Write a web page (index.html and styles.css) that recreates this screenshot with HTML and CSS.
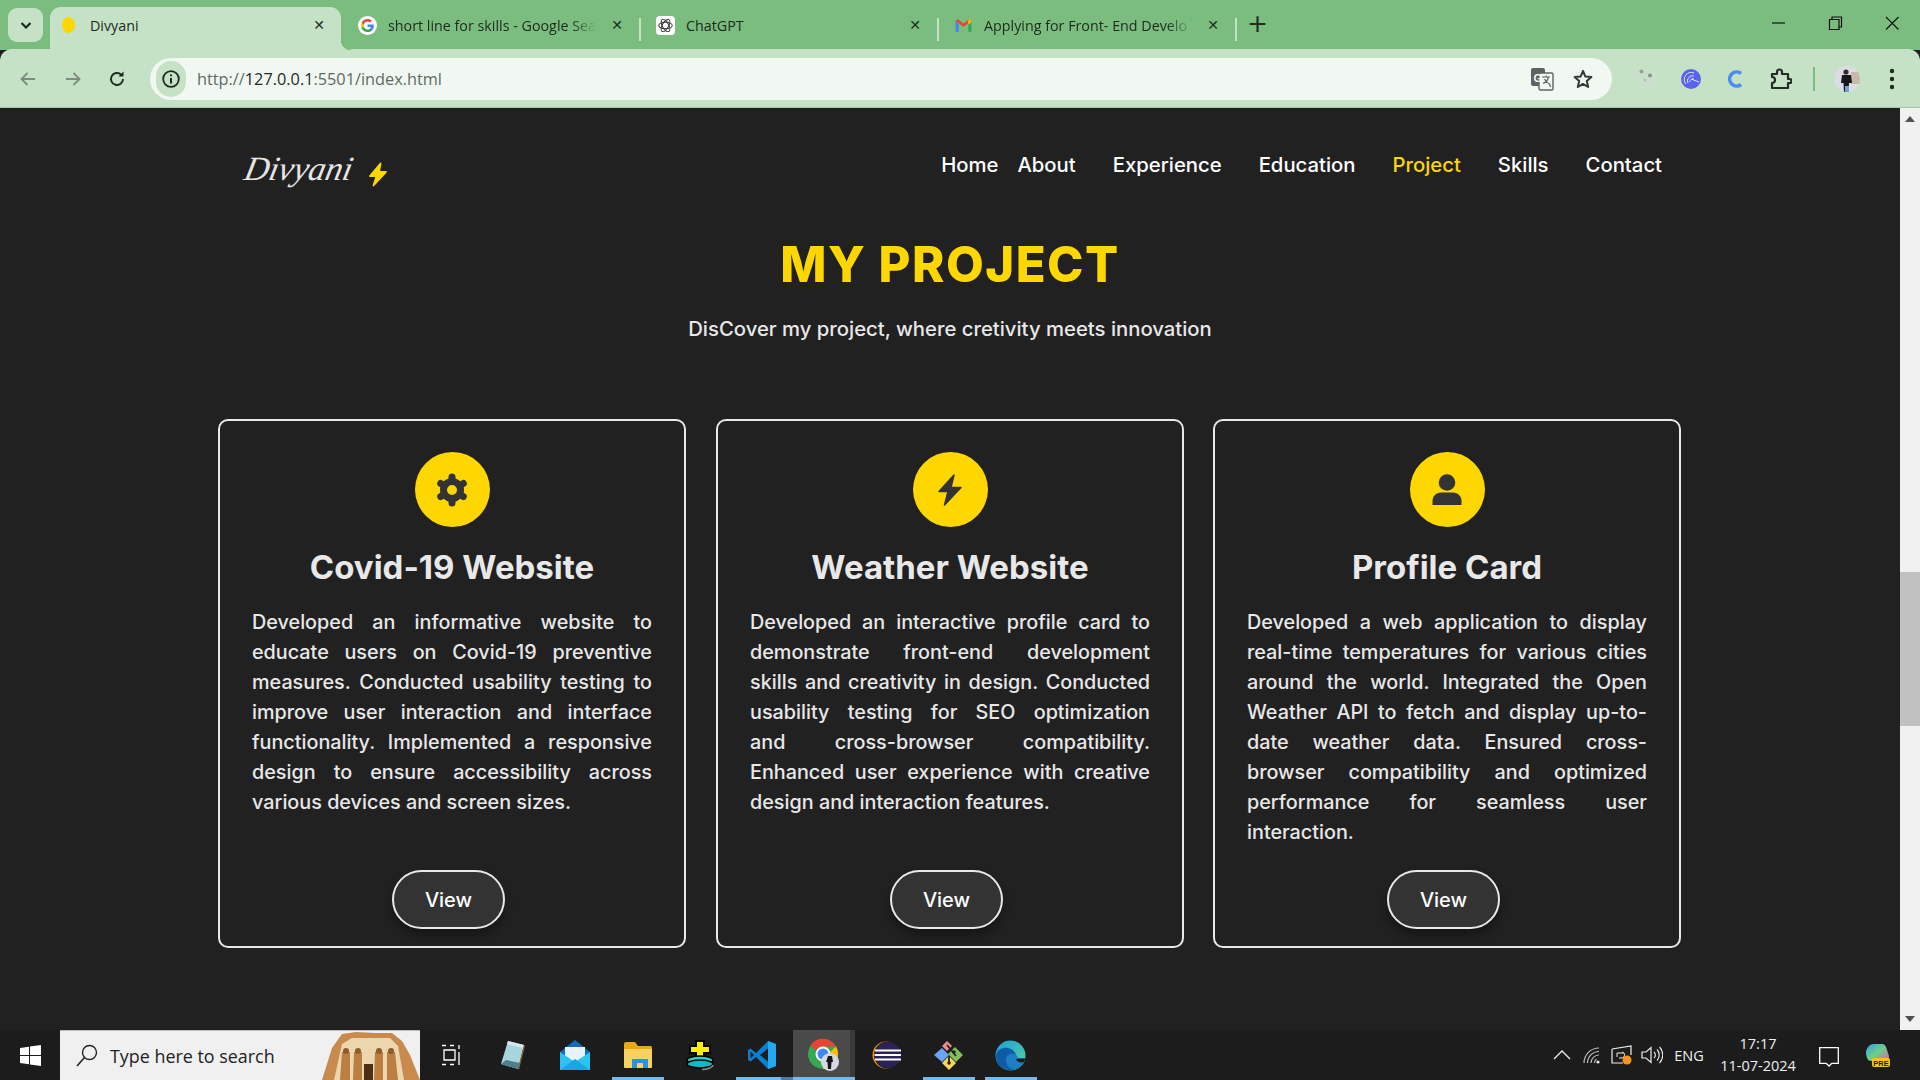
FILE: index.html
```html
<!DOCTYPE html>
<html lang="en">
<head>
  <meta charset="UTF-8" />
  <meta name="viewport" content="width=device-width, initial-scale=1.0"/>
  <title>Divyani</title>
  <link rel="stylesheet" href="styles.css">
</head>
<body>

<!-- BROWSER TABS -->
<div class="tabstrip">
  <button class="tab-search">
    <svg width="16" height="16" viewBox="0 0 16 16"><path d="M3.5 6l4.5 4.5L12.500 6" fill="none" stroke="#1f2a1f" stroke-width="2.200"/></svg>
  </button>
  <div class="tab tab-active">
    <span class="fav-dot"></span>
    <span class="tab-title">Divyani</span>
    <span class="tab-close">✕</span>
  </div>
  <div class="tab tab-sep">
    <svg class="fav" viewBox="0 0 24 24">
      <circle cx="12" cy="12" r="12" fill="#fff"/>
      <path d="M20 12.300c0-.6 0-1.100-.1-1.600H12v3.100h4.500c-.2 1-.8 1.900-1.700 2.500v2h2.700c1.600-1.500 2.500-3.600 2.500-6z" fill="#4285f4"/>
      <path d="M12 20.300c2.200 0 4.100-.7 5.500-2l-2.700-2c-.7.500-1.700.8-2.800.8-2.200 0-4-1.500-4.600-3.400H4.600v2.100c1.400 2.700 4.200 4.500 7.400 4.500z" fill="#34a853"/>
      <path d="M7.400 13.700c-.3-1-.3-2.100 0-3.100V8.500H4.600c-1 1.900-1 4.200 0 6.200z" fill="#fbbc05"/>
      <path d="M12 7c1.200 0 2.300.4 3.200 1.200l2.400-2.400C16.100 4.500 14.100 3.700 12 3.700c-3.200 0-6 1.800-7.400 4.800l2.800 2.100C8 8.600 9.800 7 12 7z" fill="#ea4335"/>
    </svg>
    <span class="tab-title fade">short line for skills - Google Sea</span>
    <span class="tab-close">✕</span>
  </div>
  <div class="tab tab-sep">
    <svg class="fav" viewBox="0 0 24 24">
      <rect width="24" height="24" rx="5" fill="#fff"/>
      <g fill="none" stroke="#333" stroke-width="1.300">
        <ellipse cx="12" cy="12" rx="8.500" ry="4"/>
        <ellipse cx="12" cy="12" rx="8.500" ry="4" transform="rotate(60 12 12)"/>
        <ellipse cx="12" cy="12" rx="8.500" ry="4" transform="rotate(120 12 12)"/>
      </g>
    </svg>
    <span class="tab-title">ChatGPT</span>
    <span class="tab-close">✕</span>
  </div>
  <div class="tab tab-sep">
    <svg class="fav" viewBox="0 0 24 24">
      <path d="M2 6v14h4V10z" fill="#4285f4"/>
      <path d="M18 10v10h4V6z" fill="#34a853"/>
      <path d="M2 6l10 8 10-8-3-2-7 5.500L5 4z" fill="#ea4335"/>
      <path d="M18 5l1-1 3 2v2l-4 3z" fill="#fbbc05"/>
    </svg>
    <span class="tab-title fade">Applying for Front- End Develo</span>
    <span class="tab-close">✕</span>
  </div>
  <span class="tab-plus">+</span>
  <div class="win-btns">
    <svg width="16" height="16" viewBox="0 0 16 16"><path d="M2 8h13" stroke="#111" stroke-width="1.200"/></svg>
    <svg width="16" height="16" viewBox="0 0 16 16"><path d="M2.500 4.500h9.500v10H2.500zM5 4.500V2h9.500v10H12" fill="none" stroke="#111" stroke-width="1.200"/></svg>
    <svg width="16" height="16" viewBox="0 0 16 16"><path d="M2 2l12.500 12.500M14.500 2L2 14.500" stroke="#111" stroke-width="1.100"/></svg>
  </div>
</div>

<!-- ADDRESS BAR -->
<div class="toolbar">
  <div class="nav-btns">
    <svg width="20" height="20" viewBox="0 0 20 20"><path d="M17 10H4M9.500 4L3.500 10l6 6" fill="none" stroke="#7e8b7f" stroke-width="1.800"/></svg>
    <svg width="20" height="20" viewBox="0 0 20 20"><path d="M3 10h13M10.500 4l6 6-6 6" fill="none" stroke="#7e8b7f" stroke-width="1.800"/></svg>
    <svg width="20" height="20" viewBox="0 0 20 20"><path d="M16 10a6 6 0 1 1-1.800-4.300" fill="none" stroke="#1f2a1f" stroke-width="1.900"/><path d="M16.500 2.500v5h-5z" fill="#1f2a1f"/></svg>
  </div>
  <div class="omnibox">
    <span class="site-info">
      <svg width="20" height="20" viewBox="0 0 20 20"><circle cx="10" cy="10" r="7.800" fill="none" stroke="#1f2a1f" stroke-width="1.800"/><path d="M10 9v5.500M10 5.500v1.800" stroke="#1f2a1f" stroke-width="2"/></svg>
    </span>
    <span class="url">http://<b>127.0.0.1</b>:5501/index.html</span>
    <svg class="translate" width="24" height="24" viewBox="0 0 24 24">
      <rect x="1" y="1" width="14" height="18" rx="2" fill="#5f6360"/>
      <rect x="9" y="6" width="14" height="17" rx="1.500" fill="#f2f8f2" stroke="#5f6360" stroke-width="1.400"/>
      <text x="3.500" y="14.500" class="translate-g">G</text>
      <path d="M12 10h8M16 8.500V10M18.500 10c-.8 3.500-3 5.500-5.500 6.500M14.500 12c1 2 3 4 5 5l1 3" fill="none" stroke="#5f6360" stroke-width="1.200"/>
    </svg>
    <svg class="star" width="22" height="22" viewBox="0 0 22 22"><path d="M11 3l2.400 5.600 6 .5-4.600 4 1.400 5.900-5.200-3.100L5.800 19l1.400-5.900-4.600-4 6-.5z" fill="none" stroke="#2f3a30" stroke-width="2" stroke-linejoin="round"/></svg>
  </div>
  <div class="ext-icons">
    <svg class="ext" width="22" height="22" viewBox="0 0 22 22"><circle cx="11" cy="11" r="9" fill="none" stroke="#d6dcd6" stroke-width="1"/><circle cx="11" cy="12" r="5" fill="none" stroke="#d6dcd6" stroke-width="1"/><circle cx="6.500" cy="3.500" r="2" fill="#9aa09a"/><circle cx="15" cy="7.500" r="2" fill="#8a908a"/><circle cx="10" cy="12" r="1.500" fill="#bbb"/></svg>
    <svg class="ext" width="22" height="22" viewBox="0 0 22 22"><circle cx="11" cy="11" r="10" fill="#5a63ee"/><g fill="none" stroke="#dfe2ff" stroke-width="1"><path d="M6 16a7 7 0 0 1 8-11"/><path d="M8 15a5 5 0 0 1 6-7"/><path d="M10 14a3 3 0 0 1 4-3"/><path d="M11 11l8 3"/></g></svg>
    <svg class="ext" width="22" height="22" viewBox="0 0 22 22"><path d="M16 5.500a7 7 0 1 0 0 11" fill="none" stroke="#4b8df0" stroke-width="3.600"/></svg>
    <svg class="ext ext-puzzle" width="24" height="24" viewBox="0 0 24 24"><path d="M4 7h5V5a2.500 2.500 0 0 1 5 0v2h6v5h1.500a2 2 0 0 1 0 4H20v5H4v-5a3 3 0 0 0 0-6z" fill="none" stroke="#222b24" stroke-width="2.200" stroke-linejoin="round"/></svg>
    <span class="ext-sep"></span>
    <svg class="avatar" width="26" height="26" viewBox="0 0 26 26">
      <defs><clipPath id="avatarClip"><circle cx="13" cy="13" r="13"/></clipPath></defs>
      <g clip-path="url(#avatarClip)">
        <rect width="26" height="26" fill="#dcdde4"/>
        <rect x="17" y="6" width="9" height="12" fill="#c9b9a8"/>
        <circle cx="12" cy="6" r="2.600" fill="#3a2a22"/>
        <path d="M8 9h9l1 8h-3l-.5 9H10l-.5-9H7z" fill="#15161a"/>
        <path d="M11 20h4v6h-4z" fill="#6fa3cf"/>
      </g>
    </svg>
    <svg class="kebab" width="6" height="22" viewBox="0 0 6 22"><circle cx="3" cy="3" r="2.200" fill="#1f2a1f"/><circle cx="3" cy="11" r="2.200" fill="#1f2a1f"/><circle cx="3" cy="19" r="2.200" fill="#1f2a1f"/></svg>
  </div>
</div>

<!-- PAGE -->
<div class="viewport">
  <div class="page">
    <nav class="site-nav">
      <div class="logo">
        <span class="logo-text">Divyani</span>
        <svg width="20" height="25" viewBox="0 0 20 25"><path d="M12.500 1.500L2 14h6.500L5.500 23.500 18 10h-7z" fill="#ffd700" stroke="#ffd700" stroke-width="1.800" stroke-linejoin="round"/></svg>
      </div>
      <ul class="nav-links">
        <li>Home</li>
        <li class="nav-about">About</li>
        <li>Experience</li>
        <li>Education</li>
        <li class="nav-active">Project</li>
        <li>Skills</li>
        <li>Contact</li>
      </ul>
    </nav>

    <h1 class="section-title">MY PROJECT</h1>
    <p class="section-sub">DisCover my project, where cretivity meets innovation</p>

    <div class="cards">
      <div class="card">
        <div class="card-icon">
          <svg width="34" height="34" viewBox="0 0 34 34">
            <circle cx="17" cy="17" r="8.500" fill="none" stroke="#333" stroke-width="7"/>
            <g stroke="#333" stroke-width="7" stroke-linecap="round">
              <path d="M17 4v2"/>
              <path d="M17 28v2"/>
              <path d="M5.700 10.500l1.800 1"/>
              <path d="M26.500 22.500l1.800 1"/>
              <path d="M5.700 23.500l1.800-1"/>
              <path d="M26.500 11.500l1.800-1"/>
            </g>
          </svg>
        </div>
        <h2>Covid-19 Website</h2>
        <p class="card-text">
          <span>Developed an informative website to</span>
          <span>educate users on Covid-19 preventive</span>
          <span>measures. Conducted usability testing to</span>
          <span>improve user interaction and interface</span>
          <span>functionality. Implemented a responsive</span>
          <span>design to ensure accessibility across</span>
          <span class="last">various devices and screen sizes.</span>
        </p>
        <button class="view-btn">View</button>
      </div>

      <div class="card">
        <div class="card-icon">
          <svg width="34" height="34" viewBox="0 0 34 34"><path d="M21 2L6 18.500h9L11.500 32 28 14.500h-10z" fill="#333" stroke="#333" stroke-width="1.500" stroke-linejoin="round"/></svg>
        </div>
        <h2>Weather Website</h2>
        <p class="card-text">
          <span>Developed an interactive profile card to</span>
          <span>demonstrate front-end development</span>
          <span>skills and creativity in design. Conducted</span>
          <span>usability testing for SEO optimization</span>
          <span>and cross-browser compatibility.</span>
          <span>Enhanced user experience with creative</span>
          <span class="last">design and interaction features.</span>
        </p>
        <button class="view-btn">View</button>
      </div>

      <div class="card">
        <div class="card-icon">
          <svg width="34" height="34" viewBox="0 0 34 34"><circle cx="17" cy="9.500" r="8.300" fill="#333"/><path d="M2.500 32v-4c0-5 4-8.500 8.500-8.500h12c4.500 0 8.500 3.500 8.500 8.500v4z" fill="#333"/></svg>
        </div>
        <h2>Profile Card</h2>
        <p class="card-text">
          <span>Developed a web application to display</span>
          <span>real-time temperatures for various cities</span>
          <span>around the world. Integrated the Open</span>
          <span>Weather API to fetch and display up-to-</span>
          <span>date weather data. Ensured cross-</span>
          <span>browser compatibility and optimized</span>
          <span>performance for seamless user</span>
          <span class="last">interaction.</span>
        </p>
        <button class="view-btn">View</button>
      </div>
    </div>
  </div>

  <div class="scrollbar">
    <span class="arrow arrow-up"></span>
    <div class="scroll-track"><div class="scroll-thumb"></div></div>
    <span class="arrow arrow-down"></span>
  </div>
</div>

<!-- WINDOWS TASKBAR -->
<div class="taskbar">
  <div class="start">
    <svg width="21" height="21" viewBox="0 0 21 21"><path d="M0 3l9-1.300V10H0zM10 1.500L21 0v10H10zM0 11h9v8.300L0 18zM10 11h11v10l-11-1.500z" fill="#fff"/></svg>
  </div>
  <div class="search">
    <svg width="24" height="26" viewBox="0 0 24 26"><circle cx="14.500" cy="9.500" r="7" fill="none" stroke="#222" stroke-width="1.400"/><path d="M9.500 14.500L2 23" stroke="#222" stroke-width="1.600"/></svg>
    <span>Type here to search</span>
    <svg class="temple" width="98" height="50" viewBox="0 0 98 50">
      <path d="M0 50L10 18 20 4l14-2 20 1 16 0 10 8 8 14 10 25z" fill="#c98a4e"/>
      <path d="M12 50l8-36 10-6 38 0 8 8 6 34z" fill="#ecd6ae"/>
      <g fill="#bb7f42">
        <path d="M20 22h8v28h-10z"/><path d="M32 22h8v28h-9z"/><path d="M53 22h8v28h-9z"/><path d="M65 22h8l3 28h-11z"/>
      </g>
      <g fill="#8f5b2a">
        <circle cx="24" cy="21" r="3"/><circle cx="36" cy="21" r="3"/><circle cx="57" cy="21" r="3"/><circle cx="69" cy="21" r="3"/>
      </g>
      <rect x="42" y="34" width="9" height="16" fill="#4d2f14"/>
    </svg>
  </div>
  <div class="task-icons">
    <div class="task">
      <svg width="20" height="22" viewBox="0 0 20 22"><path d="M1 1.500h4M9 1.500h4M3 6h11v10H3zM1 20.500h4M9 20.500h4M18 1v4M18 8v13" fill="none" stroke="#fff" stroke-width="1.300"/></svg>
    </div>
    <div class="task">
      <svg width="26" height="30" viewBox="0 0 26 30"><path d="M8 1l16 4-6 24L1 24z" fill="#a8d5dd"/><path d="M8 1l16 4-1 3L7 4z" fill="#dbe8ea"/><path d="M1 24l17 5 2-6-14-3z" fill="#4f7f8c"/><path d="M24 5l-6 24 1 .5L25 6z" fill="#8a6a2b"/></svg>
    </div>
    <div class="task">
      <svg width="30" height="32" viewBox="0 0 30 32"><path d="M15 1L30 13v18H0V13z" fill="#0f6cbd"/><path d="M5 8h20v14H5z" fill="#e8f4fb"/><path d="M0 13l15 10 15-10v18H0z" fill="#2bc4f2"/><path d="M0 31l15-11 15 11z" fill="#1aa7e0"/></svg>
    </div>
    <div class="task task-open">
      <svg width="30" height="28" viewBox="0 0 30 28"><path d="M1 3a2 2 0 0 1 2-2h9l3 4h13a2 2 0 0 1 1 2v19H1z" fill="#e8a619"/><rect x="1" y="8" width="28" height="19" rx="1" fill="#f7d261"/><path d="M9 27v-9h16v9h-5v-5h-6v5z" fill="#2a93d5"/></svg>
    </div>
    <div class="task">
      <svg width="30" height="32" viewBox="0 0 30 32">
        <path d="M11 2h8v5h6v7h-6v4h-8v-4H5V7h6z" fill="#ffee00" stroke="#000" stroke-width="2"/>
        <ellipse cx="15" cy="21" rx="13" ry="4" fill="#19d6d6" stroke="#000" stroke-width="1.500"/>
        <ellipse cx="15" cy="25" rx="13" ry="4" fill="#12b9c0" stroke="#000" stroke-width="1.500"/>
        <path d="M28 26c0 2-5 4.500-11 4.500" fill="none" stroke="#888" stroke-width="1.500"/>
      </svg>
    </div>
    <div class="task task-open task-open-split">
      <svg width="30" height="30" viewBox="0 0 30 30">
        <path d="M21 1L9 13 3.500 8.500 1 10v10l2.500 1.500L9 17l12 12 8-3V4z" fill="#0e7fcf"/>
        <path d="M21 1l8 3v22l-8 3z" fill="#23a8f2"/>
        <path d="M21 8.500L13 15l8 6.500z" fill="#1c1c1c"/>
        <path d="M3.500 11.500L7 15l-3.500 3.500z" fill="#1c1c1c"/>
      </svg>
    </div>
    <div class="task task-open task-current">
      <svg width="32" height="32" viewBox="0 0 32 32">
        <circle cx="15" cy="15" r="15" fill="#34a853"/>
        <path d="M15 0a15 15 0 0 1 13 7.500H15a7.500 7.500 0 0 0-7 4.500L2.500 6A15 15 0 0 1 15 0z" fill="#ea4335"/>
        <path d="M28 7.500A15 15 0 0 1 15 30l6-10a7.500 7.500 0 0 0 1-7z" fill="#fbbc05"/>
        <circle cx="15" cy="15" r="6.500" fill="#4285f4" stroke="#fff" stroke-width="2"/>
        <circle cx="22" cy="23" r="9" fill="#d6d8e0"/>
        <path d="M20 17h4l1 6h-1.500l-.5 7h-3l-.5-7H18z" fill="#16171b"/>
      </svg>
    </div>
    <div class="task">
      <svg width="30" height="28" viewBox="0 0 30 28">
        <circle cx="15" cy="14" r="13.500" fill="#f7941e"/>
        <circle cx="16.500" cy="14" r="13.500" fill="#1c1c1c"/>
        <circle cx="17" cy="14" r="13" fill="#2c2255"/>
        <path d="M4 9.500h26M3.500 14h27M4 18.500h26" stroke="#fff" stroke-width="2"/>
      </svg>
    </div>
    <div class="task task-open">
      <svg width="32" height="32" viewBox="0 0 32 32">
        <path d="M16 2l5 5-5 5-5-5z" fill="#f58a8a" transform="translate(-2 0)"/>
        <path d="M22 8l8 8-7 7-8-8z" fill="#7fc05a"/>
        <path d="M9 9l7 7-7 7-8-7z" fill="#6aa5f5"/>
        <path d="M16 17l7 7-7 7-7-7z" fill="#f6d75c"/>
        <path d="M14 6l9 11M16 17v7" stroke="#222" stroke-width="1.800"/>
        <circle cx="21" cy="13" r="1.800" fill="#222"/><circle cx="16" cy="24" r="1.800" fill="#222"/>
      </svg>
    </div>
    <div class="task task-open">
      <svg width="31" height="31" viewBox="0 0 31 31">
        <defs>
          <linearGradient id="edgeTop" x1="0" y1="0" x2="1" y2="1"><stop offset="0" stop-color="#1a9fdc"/><stop offset="1" stop-color="#5ed39a"/></linearGradient>
        </defs>
        <circle cx="15.500" cy="15.500" r="15" fill="url(#edgeTop)"/>
        <path d="M1 17C1 9 8 7 13 8c5 1 9 5 8 10h9c-2 9-10 13-16 12C6 29 1 24 1 17z" fill="#0c5da5"/>
        <path d="M11 20c0-5 5-8 10-5 2 1 2 4 0 4h9c-1 7-8 11-13 10-4-1-6-5-6-9z" fill="#1b7fc4"/>
        <path d="M21 19h9c0 1-.500 2-1 3-4 1-7 0-8-3z" fill="#1c1c1c"/>
      </svg>
    </div>
  </div>
  <div class="tray">
    <div class="tray-item"><svg width="18" height="10" viewBox="0 0 18 10"><path d="M1 9l8-8 8 8" fill="none" stroke="#eee" stroke-width="1.300"/></svg></div>
    <div class="tray-item"><svg width="18" height="17" viewBox="0 0 18 17"><path d="M1 16A15 15 0 0 1 16 1M4.500 16A11.500 11.500 0 0 1 16 4.500M8 16a8 8 0 0 1 8-8M11.500 16a4.500 4.500 0 0 1 2-4" fill="none" stroke="#bbb" stroke-width="1.200"/><circle cx="15" cy="15" r="1.600" fill="#eee"/></svg></div>
    <div class="tray-item"><svg width="22" height="20" viewBox="0 0 22 20"><path d="M1 4l19-3v9M1 4v14h11" fill="none" stroke="#eee" stroke-width="1.200"/><path d="M6 8h6M6 8v4M11 7a3 3 0 0 1-1 6l-2 0" fill="none" stroke="#eee" stroke-width="1"/><circle cx="16" cy="15" r="4.500" fill="#f7941e"/></svg></div>
    <div class="tray-item"><svg width="22" height="18" viewBox="0 0 22 18"><path d="M1 6h4l5-4.500v15L5 12H1z" fill="none" stroke="#eee" stroke-width="1.200"/><path d="M13 6a4 4 0 0 1 0 6M16 3.500a8 8 0 0 1 0 11M18.500 1a11.500 11.500 0 0 1 0 16" fill="none" stroke="#eee" stroke-width="1.100"/></svg></div>
    <div class="tray-lang">ENG</div>
    <div class="tray-clock">
      <span>17:17</span>
      <span>11-07-2024</span>
    </div>
    <div class="tray-note"><svg width="20" height="20" viewBox="0 0 20 20"><path d="M.7.700h18.600v15.600h-6.500L10 19l-2.800-2.700H.7z" fill="none" stroke="#fff" stroke-width="1.300"/></svg></div>
    <div class="tray-copilot">
      <svg width="26" height="25" viewBox="0 0 26 25">
        <defs><linearGradient id="copilotFill" x1="0" y1="0" x2="1" y2="1"><stop offset="0" stop-color="#2e9df2"/><stop offset=".5" stop-color="#6dd083"/><stop offset="1" stop-color="#e25ac8"/></linearGradient></defs>
        <path d="M9 1h8c2 0 3 1 4 3l3 9c.5 2-1 4-3 4h-5l-1 1H6c-2 0-3-1-4-3L1 11C.5 6 4 1 9 1z" fill="url(#copilotFill)"/>
        <rect x="7" y="15" width="18" height="9" rx="2" fill="#f5c518"/>
        <text x="16" y="22.500" class="copilot-pre">PRE</text>
      </svg>
    </div>
  </div>
</div>

</body>
</html>
```

FILE: styles.css
```css
* {
  box-sizing: border-box;
}
html, body {
  margin: 0;
  padding: 0;
  height: 100%;
  overflow: hidden;
}
body {
  font-family: "Inter", "Liberation Sans", sans-serif;
  background: #212121;
  display: flex;
  flex-direction: column;
  height: 1080px;
}

/* browser tabs */
.tabstrip {
  height: 50px;
  background: #7abd7e;
  display: flex;
  align-items: stretch;
  font-family: "Open Sans", "Liberation Sans", sans-serif;
  font-size: 14.300px;
  color: #1f2a1f;
}
.tab-search {
  width: 35px;
  height: 34px;
  margin: 8px 2px 0 8px;
  padding: 0;
  border: none;
  border-radius: 9px;
  background: #c5e2c7;
  display: flex;
  align-items: center;
  justify-content: center;
}
.tab {
  position: relative;
  width: 298px;
  display: flex;
  align-items: center;
  padding: 0 14px 0 15px;
  gap: 11px;
}
.tab-active {
  padding-left: 17px;
  gap: 15px;
}
.tab-active::before {
  content: "";
  position: absolute;
  left: 5px;
  right: 2px;
  top: 7px;
  bottom: 0;
  background: #c5e2c7;
  border-radius: 11px 11px 0 0;
}
.tab-active::after {
  content: "";
  position: absolute;
  right: -8px;
  bottom: 0;
  width: 10px;
  height: 10px;
  background: radial-gradient(circle at 100% 0, #7abd7e 10px, #c5e2c7 10.500px);
}
.tab-active > * {
  position: relative;
  z-index: 1;
}
.tab-sep::after {
  content: "";
  position: absolute;
  right: 0;
  top: 18px;
  width: 2px;
  height: 23px;
  background: #c5e2c7;
}
.fav-dot {
  width: 13px;
  height: 16px;
  border-radius: 50%;
  background: #ffd700;
}
.fav {
  width: 19px;
  height: 19px;
  flex-shrink: 0;
}
.tab-title {
  flex: 1;
  white-space: nowrap;
  overflow: hidden;
  padding-top: 1px;
}
.fade {
  -webkit-mask-image: linear-gradient(to right, #000 88%, transparent 100%);
  mask-image: linear-gradient(to right, #000 88%, transparent 100%);
}
.tab-close {
  width: 20px;
  font-size: 14px;
  font-weight: 700;
  text-align: center;
  color: #222b24;
  font-family: "DejaVu Sans", sans-serif;
}
.tab-plus {
  width: 20px;
  margin-left: 10px;
  font-size: 25px;
  line-height: 48px;
  text-align: center;
  color: #222b24;
  font-family: "DejaVu Sans", sans-serif;
}
.win-btns {
  margin-left: auto;
  width: 150px;
  padding: 0 20px 4px 0;
  display: flex;
  align-items: center;
  justify-content: space-between;
}

/* address bar */
.toolbar {
  height: 59px;
  background: #c5e2c7;
  border-radius: 12px 12px 0 0;
  border-bottom: 1px solid #a9bfaa;
  display: flex;
  align-items: center;
  margin-top: -1px;
  padding-top: 1px;
}
.nav-btns {
  width: 150px;
  padding: 0 23px 0 18px;
  display: flex;
  justify-content: space-between;
}
.omnibox {
  width: 1462px;
  height: 42px;
  border-radius: 21px;
  background: #f1f8f2;
  display: flex;
  align-items: center;
  font-family: "Open Sans", "Liberation Sans", sans-serif;
  font-size: 16.300px;
  color: #5f6b61;
}
.site-info {
  width: 30px;
  height: 36px;
  margin-left: 6px;
  border-radius: 18px;
  background: #c5e2c7;
  display: flex;
  align-items: center;
  justify-content: center;
}
.url {
  margin-left: 11px;
  flex: 1;
}
.url b {
  font-weight: 400;
  color: #1f2a1f;
}
.translate {
  margin-right: 18px;
}
.translate-g {
  font-family: "Liberation Sans", sans-serif;
  font-size: 11px;
  font-weight: 700;
  fill: #f2f8f2;
}
.star {
  margin-right: 18px;
}
.ext-icons {
  flex: 1;
  display: flex;
  align-items: center;
}
.ext {
  margin-left: 23px;
}
.ext-puzzle {
  margin-left: 21px;
}
.ext-sep {
  width: 2px;
  height: 24px;
  margin-left: 21px;
  background: #7abd7e;
}
.avatar {
  margin-left: 19px;
}
.kebab {
  margin-left: 29px;
}

/* page */
.viewport {
  flex: 1;
  display: flex;
  min-height: 0;
  background: #212121;
}
.page {
  flex: 1;
  min-width: 0;
  color: #e8e8e8;
  display: flex;
  flex-direction: column;
  align-items: center;
}
.site-nav {
  width: 1464px;
  height: 105px;
  padding: 0 20px 0 27px;
  display: flex;
  align-items: center;
  justify-content: space-between;
}
.logo {
  display: flex;
  align-items: center;
  gap: 15px;
  padding-top: 28px;
}
.logo-text {
  font-family: "Liberation Serif", serif;
  font-style: italic;
  font-size: 34px;
  line-height: 1;
  color: #e6e6e6;
  transform: skewX(-12deg);
  margin-top: -12px;
}
.nav-links {
  list-style: none;
  margin: 0;
  padding: 7px 0 0;
  display: flex;
  gap: 37px;
  font-size: 20.300px;
  font-weight: 500;
  color: #fff;
}
.nav-links .nav-about {
  margin-left: -18px;
}
.nav-links .nav-active {
  color: #ffd700;
}
.section-title {
  margin: 22px 0 0;
  font-size: 49px;
  line-height: 60px;
  font-weight: 800;
  letter-spacing: 1.500px;
  color: #ffd700;
}
.section-sub {
  margin: 19px 0 0;
  font-size: 20.300px;
  line-height: 30px;
  font-weight: 500;
  color: #e8e8e8;
}
.cards {
  width: 1464px;
  display: flex;
  gap: 30px;
  margin-top: 75px;
}
.card {
  width: 468px;
  height: 529px;
  border: 2px solid #e8e8e8;
  border-radius: 10px;
  padding: 31px 32px 0;
  display: flex;
  flex-direction: column;
  align-items: center;
  position: relative;
}
.card + .card + .card {
  margin-left: -1px;
}
.card-icon {
  width: 75px;
  height: 75px;
  flex-shrink: 0;
  border-radius: 50%;
  background: #ffd700;
  display: flex;
  align-items: center;
  justify-content: center;
}
.card h2 {
  margin: 20px 0 0;
  font-size: 33px;
  line-height: 40px;
  font-weight: 700;
  color: #e8e8e8;
}
.card-text {
  width: 100%;
  margin: 20px 0 0;
  font-size: 19.800px;
  line-height: 30px;
  font-weight: 500;
  color: #e8e8e8;
}
.card-text span {
  display: block;
  text-align: justify;
  text-align-last: justify;
  white-space: nowrap;
}
.card-text .last {
  text-align-last: left;
}
.view-btn {
  position: absolute;
  left: 172px;
  bottom: 17px;
  width: 113px;
  height: 59px;
  padding: 0;
  border: 2px solid #e8e8e8;
  border-radius: 30px;
  background: #333;
  color: #fff;
  font-family: inherit;
  font-size: 20px;
  font-weight: 500;
  box-shadow: 0 6px 10px rgba(0,0,0,0.35);
}

/* scrollbar */
.scrollbar {
  width: 20px;
  background: #f1f1f1;
  display: flex;
  flex-direction: column;
  align-items: center;
}
.arrow {
  width: 0;
  height: 0;
  margin: 8px 0;
  border-left: 5px solid transparent;
  border-right: 5px solid transparent;
}
.arrow-up {
  border-bottom: 6px solid #505050;
}
.arrow-down {
  border-top: 6px solid #505050;
}
.scroll-track {
  flex: 1;
  width: 100%;
  padding-top: 442px;
}
.scroll-thumb {
  height: 154px;
  background: #c1c1c1;
}

/* windows taskbar */
.taskbar {
  height: 50px;
  background: #1c1c1c;
  display: flex;
  align-items: stretch;
  color: #fff;
}
.start {
  width: 60px;
  display: flex;
  align-items: center;
  justify-content: center;
}
.search {
  width: 360px;
  background: #f0f0f0;
  border-top: 1px solid #bdbdbd;
  display: flex;
  align-items: center;
  color: #222;
  font-family: "Open Sans", "Liberation Sans", sans-serif;
  font-size: 17.900px;
}
.search > svg:first-child {
  margin: 0 11px 0 15px;
}
.temple {
  margin-left: auto;
  align-self: flex-end;
}
.task-icons {
  display: flex;
  width: 622px;
}
.task {
  width: 62.200px;
  position: relative;
  display: flex;
  align-items: center;
  justify-content: center;
}
.task-open::after {
  content: "";
  position: absolute;
  left: 5px;
  right: 5px;
  bottom: 0;
  height: 3px;
  background: #76b9ed;
}
.task-current {
  background: linear-gradient(to right, #4a4a4a 92%, #3a3a3a 92%);
}
.task-current::after {
  left: 0;
  right: 0;
}
.task-open-split::after {
  right: -1px;
  background: linear-gradient(to right, #76b9ed 78%, #4a7ba3 78%);
}
.tray {
  flex: 1;
  display: flex;
  align-items: center;
  padding-left: 505px;
  color: #eee;
  font-family: "Open Sans", "Liberation Sans", sans-serif;
  font-size: 14.500px;
}
.tray-item {
  width: 30px;
  flex-shrink: 0;
  display: flex;
  justify-content: center;
}
.tray-lang {
  width: 44px;
  flex-shrink: 0;
  text-align: center;
}
.tray-clock {
  width: 94px;
  flex-shrink: 0;
  display: flex;
  flex-direction: column;
  align-items: center;
  line-height: 22px;
}
.tray-note {
  width: 48px;
  flex-shrink: 0;
  display: flex;
  justify-content: center;
  padding-top: 4px;
}
.tray-copilot {
  width: 50px;
  flex-shrink: 0;
  display: flex;
  justify-content: center;
}
.copilot-pre {
  font-family: "Liberation Sans", sans-serif;
  font-size: 7.500px;
  font-weight: 700;
  text-anchor: middle;
  fill: #1c1c1c;
}
```
